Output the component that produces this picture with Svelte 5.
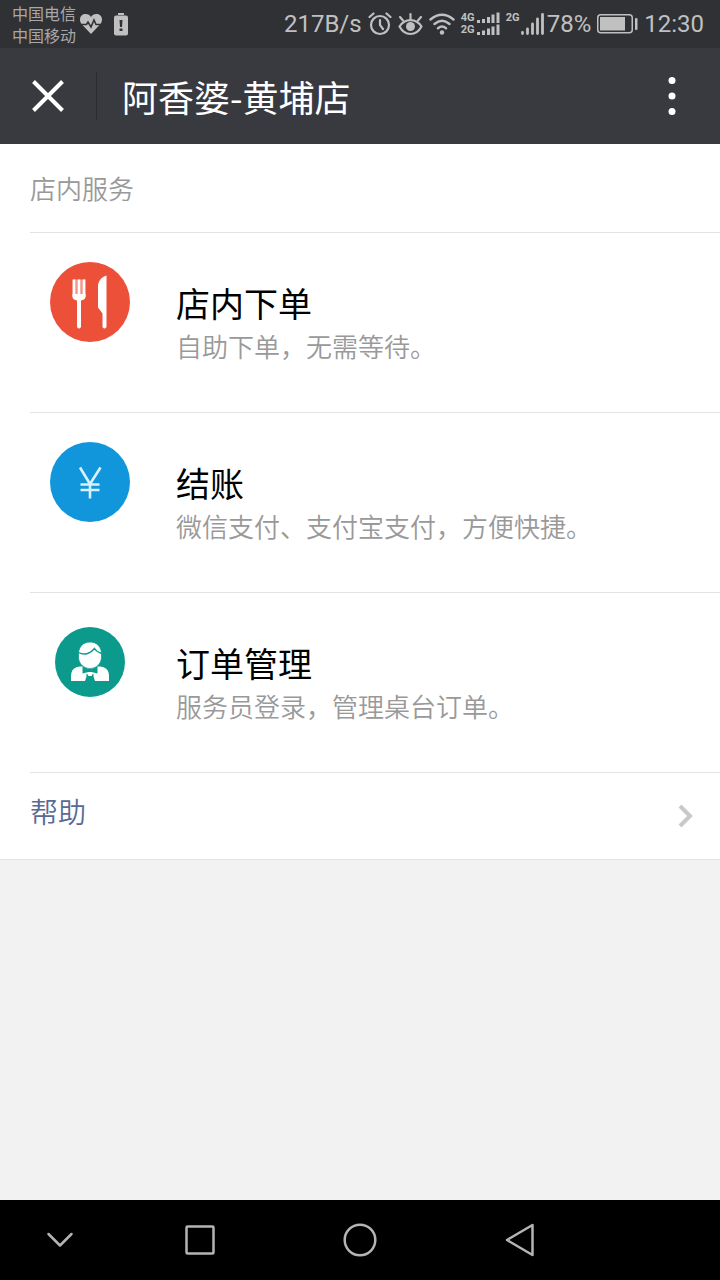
<script lang="ts">
	interface Service {
		id: string;
		icon: 'order' | 'pay' | 'staff';
		title: string;
		desc: string;
	}

	const services: Service[] = [
		{ id: 'order', icon: 'order', title: '店内下单', desc: '自助下单，无需等待。' },
		{ id: 'pay', icon: 'pay', title: '结账', desc: '微信支付、支付宝支付，方便快捷。' },
		{ id: 'manage', icon: 'staff', title: '订单管理', desc: '服务员登录，管理桌台订单。' }
	];

	const carriers = ['中国电信', '中国移动'];
</script>

<div class="screen">
	<div class="status-bar">
		<div class="carriers">
			{#each carriers as carrier}
				<span>{carrier}</span>
			{/each}
		</div>
		<div class="notices">
			<svg width="24" height="24" viewBox="0 0 24 24" aria-hidden="true">
				<path
					d="M12 22 2.5 12C-.5 8 1 2 6.500 2 9 2 11 3.200 12 5c1-1.800 3-3 5.500-3C23 2 24.500 8 21.500 12z"
					fill="currentColor"
				/>
				<path
					d="M0 12.500h7.500l1.500-2.500 3 5 3-7 2 4.500h7"
					fill="none"
					stroke="#303135"
					stroke-width="1.600"
				/>
			</svg>
			<svg width="14" height="24" viewBox="0 0 14 24" aria-hidden="true">
				<path d="M4 1h6v2H4z" fill="currentColor" />
				<rect y="3.500" width="14" height="20" rx="2" fill="currentColor" />
				<path d="M5.500 8h3l-.5 7H6zM5.500 16.500h3v2.500h-3z" fill="#303135" />
			</svg>
		</div>

		<div class="indicators">
			<span class="speed">217B/s</span>
			<svg width="24" height="24" viewBox="0 0 24 24" aria-hidden="true">
				<g fill="none" stroke="currentColor" stroke-width="2.200" stroke-linecap="round">
					<circle cx="12" cy="13" r="9" />
					<path d="M12 8v5l3 4M1.500 5 5.500 1.500M22.500 5l-4-3.500" />
				</g>
			</svg>
			<svg width="25" height="24" viewBox="0 0 25 24" aria-hidden="true">
				<g fill="none" stroke="currentColor" stroke-width="2.200" stroke-linecap="round">
					<path d="M1.500 14.500C7 6 18 6 23.500 14.500 18 24.500 7 24.500 1.500 14.500z" />
					<path d="M12.500 7V2M5 8.500 2 5M20 8.500 23 5" />
				</g>
				<circle cx="12.500" cy="14.500" r="4.500" fill="currentColor" />
			</svg>
			<svg width="26" height="24" viewBox="0 0 26 24" aria-hidden="true">
				<g fill="none" stroke="currentColor" stroke-width="2.400" stroke-linecap="round">
					<path d="M1.500 7.500Q13-2 24.500 7.500M5.500 12Q13 5.500 20.500 12M9 16.200Q13 13 17 16.200" />
				</g>
				<circle cx="13" cy="20.500" r="2.200" fill="currentColor" />
			</svg>
			<div class="signal">
				<div class="bands">
					<span>4G</span>
					<span>2G</span>
				</div>
				<svg width="24" height="24" viewBox="0 0 24 24" aria-hidden="true">
					<path
						d="M2.500 8v3M7.500 7v4M12.500 5v6M17 2.500V11M22 .5V11M2.500 20v3M7.500 18.500V23M12.500 16.500V23M17 14.500V23M22 12.500V23"
						fill="none"
						stroke="currentColor"
						stroke-width="3"
					/>
				</svg>
			</div>
			<div class="signal">
				<div class="bands">
					<span>2G</span>
				</div>
				<svg width="23" height="24" viewBox="0 0 23 24" aria-hidden="true">
					<path
						d="M1.500 20.500v1M6.500 17v4.500M11.500 12v9.500M16.500 7v14.500M21.500 2.500v19"
						fill="none"
						stroke="currentColor"
						stroke-width="2.800"
						stroke-linecap="round"
					/>
				</svg>
				<span class="percent">78%</span>
			</div>
			<svg width="41" height="20" viewBox="0 0 41 20" aria-hidden="true">
				<rect x=".75" y=".75" width="34.500" height="18" rx="3" fill="none" stroke="currentColor" stroke-width="1.500" />
				<rect x="3" y="3" width="25" height="13.500" fill="currentColor" />
				<rect x="38" y="4" width="2.500" height="12" rx="1" fill="currentColor" />
			</svg>
			<time>12:30</time>
		</div>
	</div>

	<header>
		<button class="close" aria-label="关闭">
			<svg width="32" height="32" viewBox="0 0 32 32">
				<path d="M1.500 1.500 30.500 30.500M30.500 1.500 1.500 30.500" fill="none" stroke="#fff" stroke-width="4" />
			</svg>
		</button>
		<h1>阿香婆-黄埔店</h1>
		<button class="more" aria-label="更多">
			<svg width="8" height="38" viewBox="0 0 8 38">
				<g fill="#fff">
					<circle cx="4" cy="3.500" r="3.500" />
					<circle cx="4" cy="19" r="3.500" />
					<circle cx="4" cy="34.500" r="3.500" />
				</g>
			</svg>
		</button>
	</header>

	<main>
		<section class="panel">
			<h2>店内服务</h2>
			{#each services as service (service.id)}
				<a class="service" href="#{service.id}">
					<svg class="service-icon" width="80" height="80" viewBox="0 0 80 80" aria-hidden="true">
						{#if service.icon === 'order'}
							<circle cx="40" cy="40" r="40" fill="#ec5039" />
							<path d="M22.500 17.500h13V34h-13z" fill="#fff" opacity=".4" />
							<path
								d="M24 17.500V35M29 17.500V35M34 17.500V35"
								fill="none"
								stroke="#fff"
								stroke-width="2.600"
							/>
							<path
								d="M22.500 32h13v3q-.3 2.500-4.500 3.500V65q-2 3-4 0V38.500q-4.200-1-4.500-3.500z"
								fill="#fff"
							/>
							<path
								d="M56.500 13.500V65q-2 3-4 0V51.500L48 45.500V22.500q2-7.500 8.500-9z"
								fill="#fff"
							/>
						{:else if service.icon === 'pay'}
							<circle cx="40" cy="40" r="40" fill="#1296db" />
							<path
								d="M30 25.500 40 42 50.500 25.500M40 42v14.500M30.500 42.500h19M30.500 48h19"
								fill="none"
								stroke="#d8f0ff"
								stroke-width="2.600"
							/>
						{:else}
							<circle cx="40" cy="40" r="35" fill="#0c9a8d" />
							<path
								d="M21 59v-5c0-6 4-9.500 9-9.500h20c5 0 9 3.500 9 9.500v5z"
								fill="#fff"
							/>
							<path
								d="M40 20c7 0 11.500 5 11.500 12v3C51.500 42 46 46.500 40 46.500S28.500 42 28.500 35v-3C28.500 25 33 20 40 20z"
								fill="#fff"
								stroke="#0c9a8d"
								stroke-width=".8"
							/>
							<path
								d="M28.500 30.500C35 34 41 31 44.500 26.500c1.500 2.500 4 4 7 5"
								fill="none"
								stroke="#0c9a8d"
								stroke-width="1.400"
							/>
							<!-- bow tie and shirt opening -->
							<path d="m32.500 44.500 6 2.500h3l6-2.500v7l-6-1.500h-3l-6 1.500z" fill="#0c9a8d" />
							<path d="M36.500 52h7v2.500l1.500 4.500H35l1.500-4.500z" fill="#0c9a8d" />
							<path d="M37 51.500h6L41.500 54h-3z" fill="#fff" />
						{/if}
					</svg>
					<span class="service-text">
						<span class="title">{service.title}</span>
						<span class="desc">{service.desc}</span>
					</span>
				</a>
			{/each}
			<a class="help" href="#help">
				<span>帮助</span>
				<svg width="16" height="24" viewBox="0 0 16 24" aria-hidden="true">
					<path d="m2 2 10 10L2 22" fill="none" stroke="#c8c8cd" stroke-width="4" />
				</svg>
			</a>
		</section>
	</main>

	<nav>
		<button aria-label="收起">
			<svg width="32" height="32" viewBox="0 0 32 32">
				<path d="m4.500 10 11.500 11.500 11.500-11.500" />
			</svg>
		</button>
		<button aria-label="最近任务">
			<svg width="32" height="32" viewBox="0 0 32 32">
				<rect x="2.500" y="2.500" width="27" height="27" rx="1" />
			</svg>
		</button>
		<button aria-label="主屏幕">
			<svg width="34" height="34" viewBox="0 0 34 34">
				<circle cx="17" cy="17" r="15.300" />
			</svg>
		</button>
		<button aria-label="返回">
			<svg width="34" height="34" viewBox="0 0 34 34">
				<path d="M4 17 29.500 2v30z" />
			</svg>
		</button>
	</nav>
</div>

<style>
	:global(body) {
		margin: 0;
		background: #f2f2f2;
	}

	.screen {
		display: flex;
		flex-direction: column;
		min-height: 100vh;
		font-family: 'Noto Sans CJK SC', 'Noto Sans', sans-serif;
	}

	.status-bar {
		display: flex;
		align-items: center;
		height: 48px;
		padding: 0 16px 0 12px;
		background: #303135;
		color: #c0c0c1;
	}

	.carriers {
		display: flex;
		flex-direction: column;
		font-size: 16px;
		line-height: 22px;
		color: #a8a8aa;
	}

	.notices {
		display: flex;
		align-items: center;
		gap: 11px;
		margin-left: 3px;
	}

	.indicators {
		display: flex;
		align-items: center;
		gap: 6px;
		margin-left: auto;
		font-family: Roboto, sans-serif;
		font-size: 24px;
		line-height: 28px;
	}

	.signal {
		display: flex;
		align-items: flex-start;
	}

	.percent {
		margin-left: 3px;
		line-height: 24px;
	}

	.bands {
		display: flex;
		flex-direction: column;
		width: 15px;
		font-family: 'Liberation Sans Narrow', Roboto, sans-serif;
		font-size: 11px;
		font-weight: 700;
		line-height: 12px;
	}

	header {
		display: flex;
		align-items: center;
		height: 96px;
		background: #393a3f;
		color: #fff;
	}

	button {
		display: flex;
		align-items: center;
		justify-content: center;
		padding: 0;
		border: 0;
		background: none;
		cursor: pointer;
	}

	.close {
		width: 97px;
		height: 48px;
		border-right: 1px solid #2c2d31;
	}

	h1 {
		flex: 1;
		margin: 0;
		padding-left: 25px;
		font-size: 36px;
		font-weight: 400;
		line-height: 48px;
	}

	.more {
		width: 96px;
		height: 96px;
	}

	main {
		flex: 1;
		background: #f2f2f2;
	}

	.panel {
		padding-left: 30px;
		border-bottom: 1px solid #e2e2e2;
		background: #fff;
	}

	h2 {
		margin: 0;
		padding: 24px 0;
		font-size: 26px;
		font-weight: 350;
		line-height: 40px;
		color: #999;
	}

	.service {
		display: flex;
		align-items: flex-start;
		gap: 46px;
		padding: 29px 20px 47px;
		border-top: 1px solid #e2e2e2;
		color: #000;
		text-decoration: none;
	}

	.service-icon {
		flex: none;
	}

	.service-text {
		display: flex;
		flex-direction: column;
		padding-top: 17px;
	}

	.title {
		font-size: 34px;
		line-height: 48px;
	}

	.desc {
		font-size: 26px;
		font-weight: 350;
		line-height: 38px;
		color: #999;
	}

	.help {
		display: flex;
		align-items: flex-start;
		justify-content: space-between;
		padding: 14px 26px 24px 0;
		border-top: 1px solid #e2e2e2;
		font-size: 28px;
		font-weight: 350;
		line-height: 48px;
		color: #576b95;
		text-decoration: none;
	}

	.help svg {
		margin-top: 17px;
	}

	nav {
		display: grid;
		grid-template-columns: 3fr 4fr 4fr 4fr 3fr;
		height: 80px;
		background: #000;
	}

	nav svg {
		fill: none;
		stroke: #b4b4b4;
		stroke-width: 2.5;
		stroke-linecap: round;
		stroke-linejoin: round;
	}
</style>
